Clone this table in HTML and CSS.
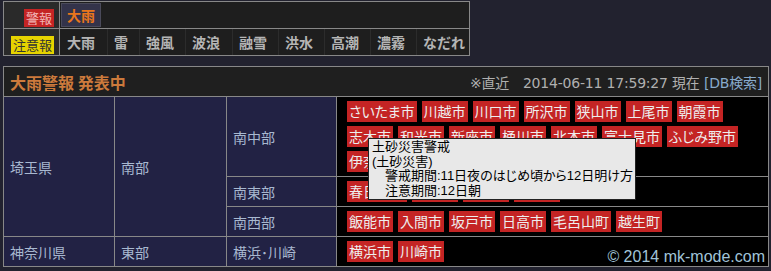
FILE: index.html
```html
<!DOCTYPE html>
<html lang="ja">
<head>
<meta charset="utf-8">
<title>大雨警報 発表中</title>
<link rel="stylesheet" href="styles.css">
</head>
<body>
<table class="kinds">
  <tr>
    <th class="kind-label"><span class="badge badge-warn">警報</span></th>
    <td class="kind-list"><div class="warn-items"><span class="item-active">大雨</span></div></td>
  </tr>
  <tr>
    <th class="kind-label"><span class="badge badge-adv">注意報</span></th>
    <td class="kind-list">
      <div class="adv-items">
        <span class="item">大雨</span><span class="item">雷</span><span class="item">強風</span><span class="item">波浪</span><span class="item">融雪</span><span class="item">洪水</span><span class="item">高潮</span><span class="item">濃霧</span><span class="item">なだれ</span>
      </div>
    </td>
  </tr>
</table>

<table class="areas">
  <colgroup><col class="c1"><col class="c2"><col class="c3"><col class="c4"></colgroup>
  <tr>
    <th colspan="4" class="head">
      <div class="head-inner">
        <span class="title">大雨警報 発表中</span>
        <span class="stamp">※直近　2014-06-11 17:59:27 現在 <span class="db">[DB検索]</span></span>
      </div>
    </th>
  </tr>
  <tr>
    <td rowspan="3" class="area">埼玉県</td>
    <td rowspan="3" class="area">南部</td>
    <td class="area">南中部</td>
    <td class="cities"><div class="tags">
      <span class="tag">さいたま市</span><span class="tag">川越市</span><span class="tag">川口市</span><span class="tag">所沢市</span><span class="tag">狭山市</span><span class="tag">上尾市</span><span class="tag">朝霞市</span>
      <span class="tag">志木市</span><span class="tag">和光市</span><span class="tag">新座市</span><span class="tag">桶川市</span><span class="tag">北本市</span><span class="tag">富士見市</span><span class="tag">ふじみ野市</span>
      <span class="tag">伊奈町</span><span class="tag">三芳町</span>
    </div></td>
  </tr>
  <tr>
    <td class="area">南東部</td>
    <td class="cities"><div class="tags">
      <span class="tag">春日部市</span><span class="tag">草加市</span><span class="tag">越谷市</span><span class="tag">八潮市</span>
    </div></td>
  </tr>
  <tr>
    <td class="area">南西部</td>
    <td class="cities"><div class="tags">
      <span class="tag">飯能市</span><span class="tag">入間市</span><span class="tag">坂戸市</span><span class="tag">日高市</span><span class="tag">毛呂山町</span><span class="tag">越生町</span>
    </div></td>
  </tr>
  <tr>
    <td class="area">神奈川県</td>
    <td class="area">東部</td>
    <td class="area">横浜･川崎</td>
    <td class="cities"><div class="tags">
      <span class="tag">横浜市</span><span class="tag">川崎市</span>
    </div></td>
  </tr>
</table>

<div class="tooltip"><div>土砂災害警戒</div><div>(土砂災害)</div><div>　警戒期間:11日夜のはじめ頃から12日明け方</div><div>　注意期間:12日朝</div></div>

<div class="copyright">© 2014 mk-mode.com</div>
</body>
</html>
```

FILE: styles.css
```css
* { box-sizing: border-box; }
html, body { margin: 0; }
body {
  position: relative;
  width: 771px;
  height: 271px;
  overflow: hidden;
  background: #22222f;
  padding: 1px 0 0 3px;
  font-family: "Noto Sans CJK JP", sans-serif;
}
table { border-collapse: collapse; }

/* top kinds table */
.kinds { width: 467px; table-layout: fixed; }
.kinds th, .kinds td { border: 1px solid #888; padding: 0; height: 27px; }
.kind-label {
  width: 56px;
  background: #2a2a2a;
  text-align: right;
  padding-right: 5px !important;
  font-weight: normal;
}
.badge {
  display: inline-block;
  height: 18px;
  line-height: 18px;
  padding: 0 2px;
  font-size: 13px;
  vertical-align: middle;
}
.badge-warn { background: #c42424; color: #f2b4b4; }
.badge-adv { background: #e6d300; color: #333; }
.kind-list { background: #1e1e1e; }
.warn-items { display: flex; padding-left: 1px; }
.item-active {
  height: 24px;
  line-height: 22px;
  border: 1px solid #4a4a5a;
  background: #33334a;
  color: #e8761c;
  padding: 0 5px;
  font-weight: bold;
  font-size: 14px;
}
.adv-items {
  display: grid;
  grid-template-columns: 47px 32px 46px 47px 46px 46px 46px 46px 1fr;
  height: 26px;
}
.item {
  padding-left: 6px;
  line-height: 26px;
  color: #b5b5b5;
  font-weight: bold;
  font-size: 14px;
  border-left: 1px solid #2c2c2c;
}
.item:first-child { border-left: 0; padding-left: 7px; }

/* areas table */
.areas { width: 766px; table-layout: fixed; margin-top: 10px; }
.areas td, .areas th { border: 1px solid #888; padding: 0; }
.c1 { width: 111px; }
.c2 { width: 112px; }
.c3 { width: 110px; }
.head { background: #1f1f1f; height: 30px; font-weight: normal; }
.head-inner {
  display: flex;
  justify-content: space-between;
  align-items: center;
  padding: 0 6px 0 6px;
}
.title { color: #cc7a3c; font-weight: bold; font-size: 16px; }
.stamp {
  color: #b0b0b0;
  font-size: 14px;
  letter-spacing: -0.2px;
  font-family: "DejaVu Sans", "Noto Sans CJK JP", sans-serif;
}
.db { color: #88aacc; }
.area {
  background: #222244;
  color: #a8b8d0;
  font-size: 14px;
  padding: 0 6px !important;
  vertical-align: middle;
}
.cities { background: #000; padding: 4px 4px 4px 10px !important; }
.tags { display: flex; flex-wrap: wrap; gap: 4px 5px; }
.tag {
  height: 21px;
  line-height: 21px;
  padding: 0 2px;
  background: #c42424;
  color: #eee;
  font-size: 14px;
  font-feature-settings: "palt";
}

/* native-like tooltip overlay */
.tooltip {
  position: absolute;
  left: 368px;
  top: 138px;
  width: 268px;
  height: 62px;
  background: #e8e8e8;
  border: 1px solid #222;
  color: #000;
  font-size: 13px;
  line-height: 14.5px;
  padding: 1px 3px;
  white-space: pre;
  font-family: "Liberation Sans", "Noto Sans CJK JP", sans-serif;
  font-feature-settings: "palt";
}

.copyright {
  position: absolute;
  right: 6px;
  bottom: 5px;
  font-family: "Liberation Sans", sans-serif;
  font-size: 16px;
  line-height: 18px;
  color: #a0c4d8;
}
```
